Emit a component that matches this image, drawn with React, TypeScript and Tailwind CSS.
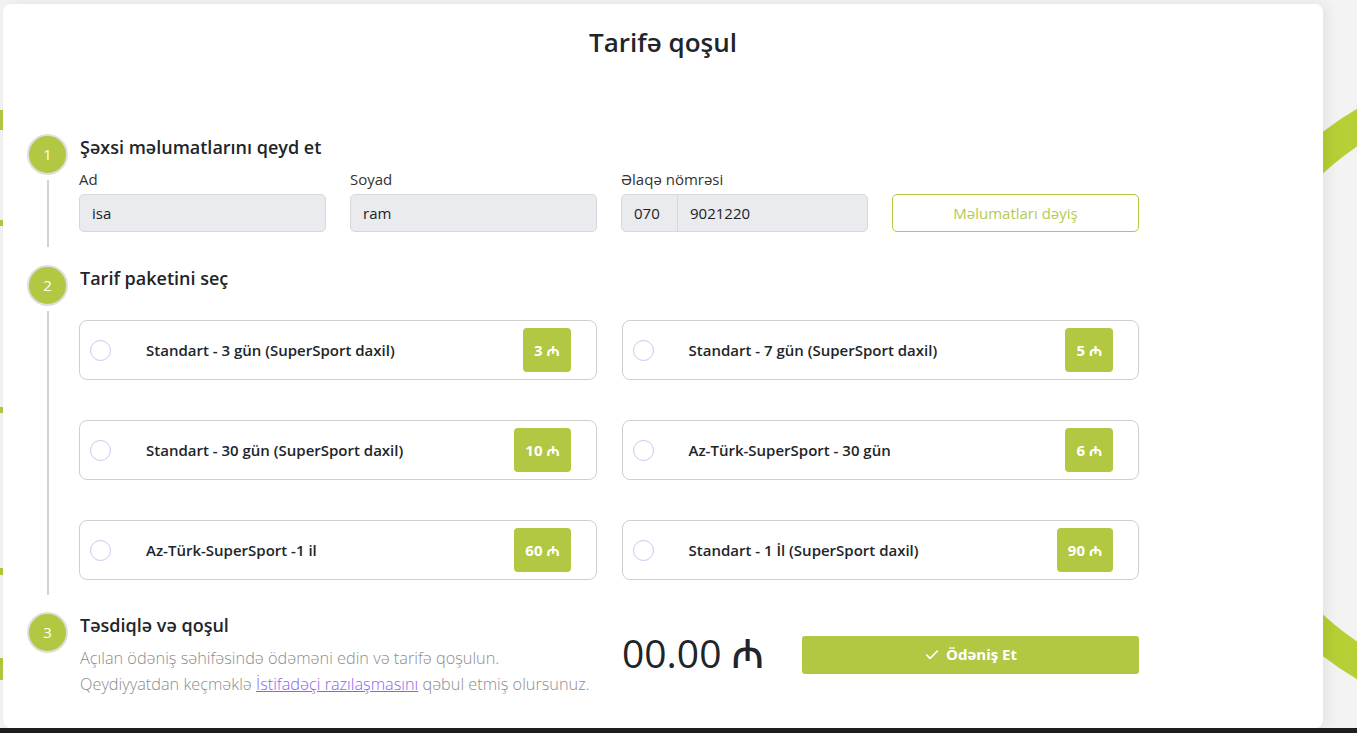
import { Check } from "lucide-react";

/* ========================
   Data
======================== */
type Tariff = {
  id: number;
  name: string;
  price: number;
};

const TARIFFS: Tariff[] = [
  { id: 1, name: "Standart - 3 gün (SuperSport daxil)", price: 3 },
  { id: 2, name: "Standart - 7 gün (SuperSport daxil)", price: 5 },
  { id: 3, name: "Standart - 30 gün (SuperSport daxil)", price: 10 },
  { id: 4, name: "Az-Türk-SuperSport - 30 gün", price: 6 },
  { id: 5, name: "Az-Türk-SuperSport -1 il", price: 60 },
  { id: 6, name: "Standart - 1 İl (SuperSport daxil)", price: 90 },
];

const FONT = {
  fontFamily: '"Open Sans", "Noto Sans", "DejaVu Sans", sans-serif',
};

/* ========================
   Parts
======================== */
function StepMarker({ n, line = true }: { n: number; line?: boolean }) {
  return (
    <div className="flex w-[41px] shrink-0 flex-col items-center">
      <div className="flex h-[41px] w-[41px] items-center justify-center rounded-full border-2 border-[#dedede] bg-[#b2c742] text-[15px] text-white">
        {n}
      </div>
      {line && <div className="mt-[5px] w-[2px] flex-1 bg-[#d3d3d3]" />}
    </div>
  );
}

function Field({ label, value }: { label: string; value: string }) {
  return (
    <div>
      <div className="mb-[4px] text-[15px] leading-[22px] text-[#333]">{label}</div>
      <div className="flex h-[38px] items-center rounded-[5px] border border-[#d6d8db] bg-[#e9ebef] px-3 text-[15px] text-[#222]">
        {value}
      </div>
    </div>
  );
}

function TariffCard({ t }: { t: Tariff }) {
  return (
    <label className="flex h-[60px] cursor-pointer items-center rounded-lg border border-[#cfcfcf] bg-white pl-[10px] pr-[25px]">
      <span className="h-[21px] w-[21px] shrink-0 rounded-full border border-[#c9c6ef]" />
      <span className="ml-[35px] flex-1 text-[15px] font-semibold text-[#212529]">{t.name}</span>
      <span className="flex h-[44px] items-center rounded-[4px] bg-[#b2c742] px-[11px] text-[15px] font-bold text-white">
        {t.price} ₼
      </span>
    </label>
  );
}

/* ========================
   Page
======================== */
export default function App() {
  return (
    <div className="relative min-h-screen overflow-hidden bg-[#f3f3f3]" style={FONT}>
      {/* background decoration */}
      <svg className="absolute left-0 top-0" width="1357" height="733" aria-hidden>
        <defs>
          <linearGradient id="ring" x1="0" x2="1" y1="0" y2="0">
            <stop offset="0" stopColor="#b2cc35" />
            <stop offset="1" stopColor="#c2dd38" />
          </linearGradient>
        </defs>
        <circle cx="1525" cy="394" r="315" fill="none" stroke="url(#ring)" strokeWidth="32" />
      </svg>
      <div className="absolute left-0 top-[110px] h-[20px] w-[4px] bg-[#b2c742]" />
      <div className="absolute left-0 top-[220px] h-[6px] w-[4px] bg-[#b2c742]" />
      <div className="absolute left-0 top-[407px] h-[6px] w-[4px] bg-[#b2c742]" />
      <div className="absolute left-0 top-[568px] h-[7px] w-[4px] bg-[#b2c742]" />
      <div className="absolute left-0 top-[658px] h-[22px] w-[4px] bg-[#b2c742]" />

      <div className="relative z-10 pl-[3px] pt-[4px]">
        <div className="h-[724px] w-[1320px] rounded-lg bg-white shadow-[4px_0_14px_rgba(0,0,0,0.07)]">
          <h1 className="pt-[20px] text-center text-[26px] font-semibold leading-[36px] text-[#212529]">
            Tarifə qoşul
          </h1>

          <div className="mt-[74px] pl-[24px]">
            {/* step 1 */}
            <div className="flex">
              <StepMarker n={1} />
              <div className="ml-[11px] w-[1060px] pb-[15px]">
                <h2 className="pl-px text-[18px] font-semibold leading-[26px] text-[#212529]">
                  Şəxsi məlumatlarını qeyd et
                </h2>
                <div className="mt-[8px] grid grid-cols-4 items-end gap-x-[24px]">
                  <Field label="Ad" value="isa" />
                  <Field label="Soyad" value="ram" />
                  <div>
                    <div className="mb-[4px] text-[15px] leading-[22px] text-[#333]">Əlaqə nömrəsi</div>
                    <div className="flex h-[38px] items-center rounded-[5px] border border-[#d6d8db] bg-[#e9ebef] text-[15px] text-[#222]">
                      <span className="flex h-full w-[56px] items-center border-r border-[#d6d8db] pl-3">070</span>
                      <span className="pl-3">9021220</span>
                    </div>
                  </div>
                  <button className="h-[38px] rounded-[5px] border border-[#b2c742] bg-white text-[15px] text-[#b6ca4e]">
                    Məlumatları dəyiş
                  </button>
                </div>
              </div>
            </div>

            {/* step 2 */}
            <div className="mt-[18px] flex">
              <StepMarker n={2} />
              <div className="ml-[11px] w-[1060px] pb-[15px]">
                <h2 className="pl-px text-[18px] font-semibold leading-[26px] text-[#212529]">Tarif paketini seç</h2>
                <div className="mt-[29px] grid grid-cols-2 gap-x-[25px] gap-y-[40px]">
                  {TARIFFS.map((t) => (
                    <TariffCard key={t.id} t={t} />
                  ))}
                </div>
              </div>
            </div>

            {/* step 3 */}
            <div className="mt-[17px] flex">
              <StepMarker n={3} line={false} />
              <div className="ml-[11px] flex w-[1060px]">
                <div className="w-[543px] pl-px">
                  <h2 className="text-[18px] font-semibold leading-[26px] text-[#212529]">Təsdiqlə və qoşul</h2>
                  <p className="mt-[7px] text-[16.3px] font-light leading-[26px] text-[#8c8c8c]">
                    Açılan ödəniş səhifəsində ödəməni edin və tarifə qoşulun.
                    <br />
                    Qeydiyyatdan keçməklə{" "}
                    <a href="#" className="text-[#8a63f0] underline">
                      İstifadəçi razılaşmasını
                    </a>{" "}
                    qəbul etmiş olursunuz.
                  </p>
                </div>
                <div className="flex flex-1 items-center">
                  <div className="mb-[4px] w-[180px] text-[39px] font-medium leading-none text-[#212529]">00.00 ₼</div>
                  <button className="flex h-[38px] flex-1 items-center justify-center gap-[6px] rounded-[3px] bg-[#b2c742] text-[15px] font-bold text-white">
                    <Check size={16} strokeWidth={2.5} />
                    Ödəniş Et
                  </button>
                </div>
              </div>
            </div>
          </div>
        </div>
      </div>
      <div className="relative z-10 h-[6px] bg-[#1e1e1e]" />
    </div>
  );
}
